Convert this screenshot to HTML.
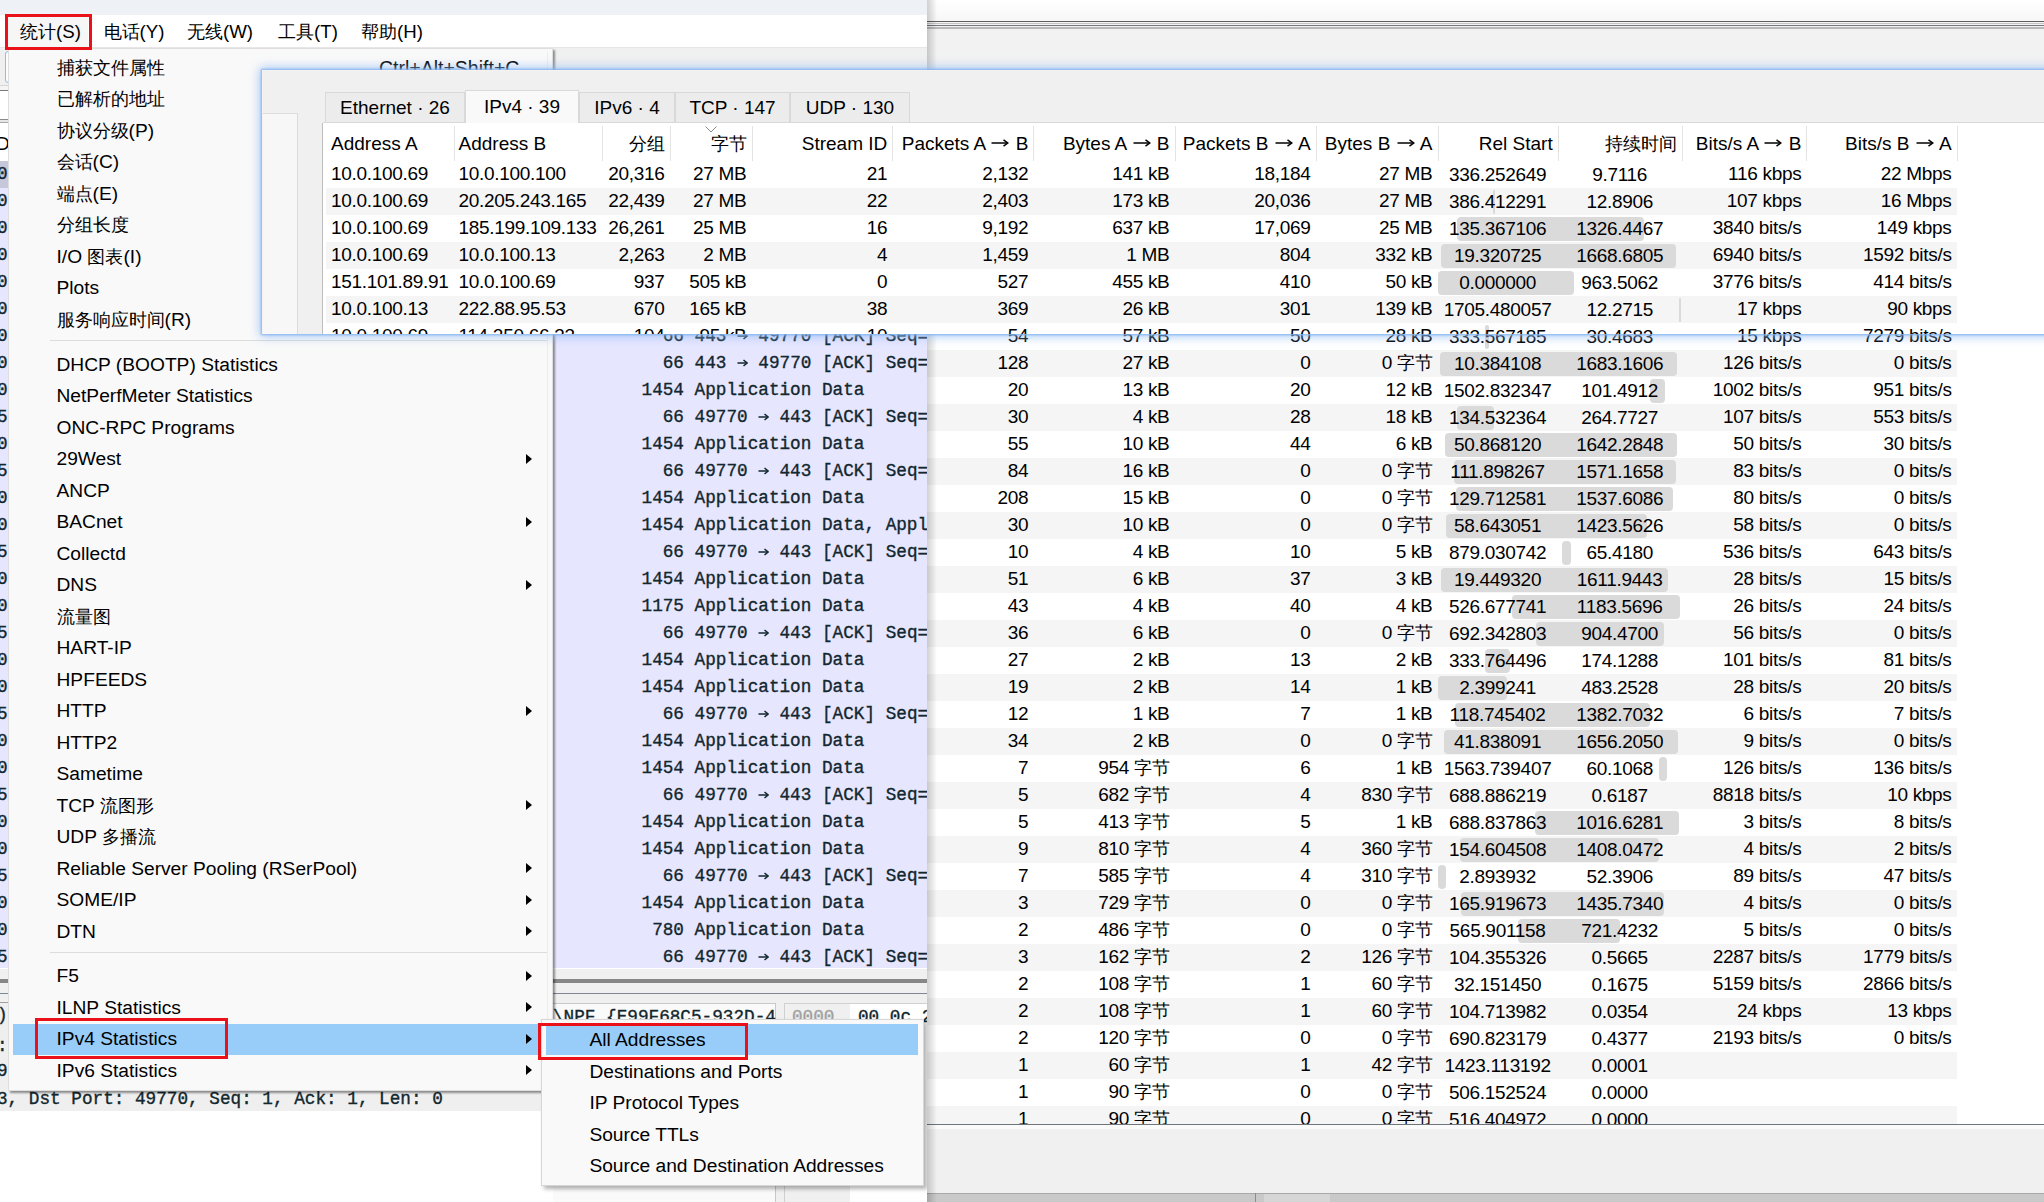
<!DOCTYPE html><html><head><meta charset="utf-8"><style>
*{margin:0;padding:0;box-sizing:border-box}
html,body{width:2044px;height:1202px;overflow:hidden;background:#f0f0f0;font-family:"Liberation Sans", sans-serif;font-size:19px;color:#000}
.a{position:absolute}
.t{position:absolute;white-space:nowrap;line-height:27px;height:27px}
.r{position:absolute;white-space:nowrap;line-height:27px;height:27px;text-align:right}
.c{position:absolute;white-space:nowrap;line-height:27px;height:27px;text-align:center}
.m{position:absolute;white-space:pre;line-height:27px;height:27px;font-family:"Liberation Mono", monospace;font-size:17.7px;color:#12272e;-webkit-text-stroke:0.35px #12272e}
.mi{position:absolute;white-space:nowrap;line-height:31px;height:31px;font-size:19.2px}
.cj{font-size:17.8px}
.n{letter-spacing:-0.3px}
.arr{position:absolute;width:0;height:0;border-top:5px solid transparent;border-bottom:5px solid transparent;border-left:6.5px solid #000}
</style></head><body>
<div style="position:absolute;left:927px;top:0px;width:1117px;height:70px;background:#f2f2f2"></div>
<div style="position:absolute;left:927px;top:0px;width:1117px;height:21px;background:linear-gradient(#ffffff,#f7f7f7)"></div>
<div style="position:absolute;left:927px;top:21px;width:1117px;height:1px;background:#5e5e5e"></div>
<div style="position:absolute;left:927px;top:23px;width:1117px;height:1px;background:#c4c4c4"></div>
<div style="position:absolute;left:927px;top:25px;width:1117px;height:1px;background:#707880"></div>
<div style="position:absolute;left:927px;top:27px;width:1117px;height:2px;background:#b9b9b9"></div>
<div class="a" style="left:262px;top:70px;width:1782px;height:1132px;background:#f0f0f0;overflow:hidden">
<div style="position:absolute;left:0px;top:43px;width:36px;height:1100px;background:#f7f7f7;border-top:1px solid #dcdcdc;border-right:1px solid #dcdcdc"></div>
<div style="position:absolute;left:61px;top:52px;width:1721px;height:1px;background:#d9d9d9"></div>
<div style="position:absolute;left:63px;top:22px;width:140px;height:31px;background:#ececec;border:1px solid #d9d9d9;border-bottom:1px solid #d9d9d9"></div>
<div class="c" style="left:63px;top:24px;width:140px">Ethernet · 26</div>
<div style="position:absolute;left:203px;top:20px;width:114px;height:33px;background:#f9f9f9;border:1px solid #d9d9d9;border-bottom:none"></div>
<div class="c" style="left:203px;top:23px;width:114px">IPv4 · 39</div>
<div style="position:absolute;left:317px;top:22px;width:96px;height:31px;background:#ececec;border:1px solid #d9d9d9;border-bottom:1px solid #d9d9d9"></div>
<div class="c" style="left:317px;top:24px;width:96px">IPv6 · 4</div>
<div style="position:absolute;left:413px;top:22px;width:115px;height:31px;background:#ececec;border:1px solid #d9d9d9;border-bottom:1px solid #d9d9d9"></div>
<div class="c" style="left:413px;top:24px;width:115px">TCP · 147</div>
<div style="position:absolute;left:528px;top:22px;width:120px;height:31px;background:#ececec;border:1px solid #d9d9d9;border-bottom:1px solid #d9d9d9"></div>
<div class="c" style="left:528px;top:24px;width:120px">UDP · 130</div>
<div style="position:absolute;left:60px;top:53px;width:1722px;height:1001px;background:#ffffff;border-left:1px solid #bdbdbd"></div>
<div style="position:absolute;left:191.5px;top:56px;width:1px;height:35px;background:#e3e3e3"></div>
<div style="position:absolute;left:339.5px;top:56px;width:1px;height:35px;background:#e3e3e3"></div>
<div style="position:absolute;left:407.5px;top:56px;width:1px;height:35px;background:#e3e3e3"></div>
<div style="position:absolute;left:489.5px;top:56px;width:1px;height:35px;background:#e3e3e3"></div>
<div style="position:absolute;left:630.3px;top:56px;width:1px;height:35px;background:#e3e3e3"></div>
<div style="position:absolute;left:771.4000000000001px;top:56px;width:1px;height:35px;background:#e3e3e3"></div>
<div style="position:absolute;left:912.5px;top:56px;width:1px;height:35px;background:#e3e3e3"></div>
<div style="position:absolute;left:1053.6px;top:56px;width:1px;height:35px;background:#e3e3e3"></div>
<div style="position:absolute;left:1175.5px;top:56px;width:1px;height:35px;background:#e3e3e3"></div>
<div style="position:absolute;left:1295.7px;top:56px;width:1px;height:35px;background:#e3e3e3"></div>
<div style="position:absolute;left:1419.7px;top:56px;width:1px;height:35px;background:#e3e3e3"></div>
<div style="position:absolute;left:1544.4px;top:56px;width:1px;height:35px;background:#e3e3e3"></div>
<div style="position:absolute;left:1694.6px;top:56px;width:1px;height:35px;background:#e3e3e3"></div>
<div class="t" style="left:69px;top:60px">Address A</div>
<div class="t" style="left:196.5px;top:60px">Address B</div>
<div class="r" style="left:339.5px;top:60px;width:63.0px"><span class="cj">分组</span></div>
<div class="r" style="left:407.5px;top:60px;width:77.0px"><span class="cj">字节</span></div>
<div class="r" style="left:489.5px;top:60px;width:135.79999999999995px">Stream ID</div>
<div class="r" style="left:630.3px;top:60px;width:136.10000000000014px">Packets A <svg width="18" height="10" style="vertical-align:2.5px;margin:0 1px"><path d="M0.5 5H16" stroke="#000" stroke-width="1.5"/><path d="M12.5 1.8L16.8 5L12.5 8.2" fill="none" stroke="#000" stroke-width="1.5"/></svg> B</div>
<div class="r" style="left:771.4000000000001px;top:60px;width:136.0999999999999px">Bytes A <svg width="18" height="10" style="vertical-align:2.5px;margin:0 1px"><path d="M0.5 5H16" stroke="#000" stroke-width="1.5"/><path d="M12.5 1.8L16.8 5L12.5 8.2" fill="none" stroke="#000" stroke-width="1.5"/></svg> B</div>
<div class="r" style="left:912.5px;top:60px;width:136.0999999999999px">Packets B <svg width="18" height="10" style="vertical-align:2.5px;margin:0 1px"><path d="M0.5 5H16" stroke="#000" stroke-width="1.5"/><path d="M12.5 1.8L16.8 5L12.5 8.2" fill="none" stroke="#000" stroke-width="1.5"/></svg> A</div>
<div class="r" style="left:1053.6px;top:60px;width:116.90000000000009px">Bytes B <svg width="18" height="10" style="vertical-align:2.5px;margin:0 1px"><path d="M0.5 5H16" stroke="#000" stroke-width="1.5"/><path d="M12.5 1.8L16.8 5L12.5 8.2" fill="none" stroke="#000" stroke-width="1.5"/></svg> A</div>
<div class="r" style="left:1175.5px;top:60px;width:115.20000000000005px">Rel Start</div>
<div class="r" style="left:1295.7px;top:60px;width:119.0px"><span class="cj">持续时间</span></div>
<div class="r" style="left:1419.7px;top:60px;width:119.70000000000005px">Bits/s A <svg width="18" height="10" style="vertical-align:2.5px;margin:0 1px"><path d="M0.5 5H16" stroke="#000" stroke-width="1.5"/><path d="M12.5 1.8L16.8 5L12.5 8.2" fill="none" stroke="#000" stroke-width="1.5"/></svg> B</div>
<div class="r" style="left:1544.4px;top:60px;width:145.19999999999982px">Bits/s B <svg width="18" height="10" style="vertical-align:2.5px;margin:0 1px"><path d="M0.5 5H16" stroke="#000" stroke-width="1.5"/><path d="M12.5 1.8L16.8 5L12.5 8.2" fill="none" stroke="#000" stroke-width="1.5"/></svg> A</div>
<svg class="a" style="left:443px;top:56px" width="12" height="8"><polyline points="0.5,0.5 6,6 11.5,0.5" fill="none" stroke="#8a8a8a" stroke-width="1"/></svg>
<div style="position:absolute;left:64px;top:118px;width:1630.6px;height:27px;background:#f5f5f5"></div>
<div style="position:absolute;left:1230.6px;top:120px;width:2px;height:24px;background:#dadada;border-radius:4px"></div>
<div style="position:absolute;left:1195.1px;top:147px;width:187.4px;height:24px;background:#dadada;border-radius:4px"></div>
<div style="position:absolute;left:64px;top:172px;width:1630.6px;height:27px;background:#f5f5f5"></div>
<div style="position:absolute;left:1178.7px;top:174px;width:235.8px;height:24px;background:#dadada;border-radius:4px"></div>
<div style="position:absolute;left:1176.0px;top:201px;width:136.1px;height:24px;background:#dadada;border-radius:4px"></div>
<div style="position:absolute;left:64px;top:226px;width:1630.6px;height:27px;background:#f5f5f5"></div>
<div style="position:absolute;left:1417.0px;top:228px;width:2px;height:24px;background:#dadada;border-radius:4px"></div>
<div style="position:absolute;left:1223.1px;top:255px;width:4.3px;height:24px;background:#dadada;border-radius:4px"></div>
<div style="position:absolute;left:64px;top:280px;width:1630.6px;height:27px;background:#f5f5f5"></div>
<div style="position:absolute;left:1177.5px;top:282px;width:237.8px;height:24px;background:#dadada;border-radius:4px"></div>
<div style="position:absolute;left:1388.3px;top:309px;width:14.3px;height:24px;background:#dadada;border-radius:4px"></div>
<div style="position:absolute;left:64px;top:334px;width:1630.6px;height:27px;background:#f5f5f5"></div>
<div style="position:absolute;left:1195.0px;top:336px;width:37.4px;height:24px;background:#dadada;border-radius:4px"></div>
<div style="position:absolute;left:1183.2px;top:363px;width:232.0px;height:24px;background:#dadada;border-radius:4px"></div>
<div style="position:absolute;left:64px;top:388px;width:1630.6px;height:27px;background:#f5f5f5"></div>
<div style="position:absolute;left:1191.8px;top:390px;width:222.0px;height:24px;background:#dadada;border-radius:4px"></div>
<div style="position:absolute;left:1194.3px;top:417px;width:217.2px;height:24px;background:#dadada;border-radius:4px"></div>
<div style="position:absolute;left:64px;top:442px;width:1630.6px;height:27px;background:#f5f5f5"></div>
<div style="position:absolute;left:1184.3px;top:444px;width:201.1px;height:24px;background:#dadada;border-radius:4px"></div>
<div style="position:absolute;left:1300.2px;top:471px;width:9.2px;height:24px;background:#dadada;border-radius:4px"></div>
<div style="position:absolute;left:64px;top:496px;width:1630.6px;height:27px;background:#f5f5f5"></div>
<div style="position:absolute;left:1178.7px;top:498px;width:227.7px;height:24px;background:#dadada;border-radius:4px"></div>
<div style="position:absolute;left:1250.4px;top:525px;width:167.2px;height:24px;background:#dadada;border-radius:4px"></div>
<div style="position:absolute;left:64px;top:550px;width:1630.6px;height:27px;background:#f5f5f5"></div>
<div style="position:absolute;left:1273.8px;top:552px;width:127.8px;height:24px;background:#dadada;border-radius:4px"></div>
<div style="position:absolute;left:1223.2px;top:579px;width:24.6px;height:24px;background:#dadada;border-radius:4px"></div>
<div style="position:absolute;left:64px;top:604px;width:1630.6px;height:27px;background:#f5f5f5"></div>
<div style="position:absolute;left:1176.3px;top:606px;width:68.3px;height:24px;background:#dadada;border-radius:4px"></div>
<div style="position:absolute;left:1192.8px;top:633px;width:195.4px;height:24px;background:#dadada;border-radius:4px"></div>
<div style="position:absolute;left:64px;top:658px;width:1630.6px;height:27px;background:#f5f5f5"></div>
<div style="position:absolute;left:1181.9px;top:660px;width:234.0px;height:24px;background:#dadada;border-radius:4px"></div>
<div style="position:absolute;left:1396.9px;top:687px;width:8.5px;height:24px;background:#dadada;border-radius:4px"></div>
<div style="position:absolute;left:64px;top:712px;width:1630.6px;height:27px;background:#f5f5f5"></div>
<div style="position:absolute;left:1273.3px;top:741px;width:143.6px;height:24px;background:#dadada;border-radius:4px"></div>
<div style="position:absolute;left:64px;top:766px;width:1630.6px;height:27px;background:#f5f5f5"></div>
<div style="position:absolute;left:1197.8px;top:768px;width:198.9px;height:24px;background:#dadada;border-radius:4px"></div>
<div style="position:absolute;left:1176.4px;top:795px;width:7.4px;height:24px;background:#dadada;border-radius:4px"></div>
<div style="position:absolute;left:64px;top:820px;width:1630.6px;height:27px;background:#f5f5f5"></div>
<div style="position:absolute;left:1199.4px;top:822px;width:202.8px;height:24px;background:#dadada;border-radius:4px"></div>
<div style="position:absolute;left:1256.0px;top:849px;width:101.9px;height:24px;background:#dadada;border-radius:4px"></div>
<div style="position:absolute;left:64px;top:874px;width:1630.6px;height:27px;background:#f5f5f5"></div>
<div style="position:absolute;left:64px;top:928px;width:1630.6px;height:27px;background:#f5f5f5"></div>
<div style="position:absolute;left:64px;top:982px;width:1630.6px;height:27px;background:#f5f5f5"></div>
<div style="position:absolute;left:64px;top:1036px;width:1630.6px;height:27px;background:#f5f5f5"></div>
<div class="t n" style="left:69px;top:89.7px">10.0.100.69</div>
<div class="t n" style="left:196.5px;top:89.7px">10.0.100.100</div>
<div class="r n" style="left:339.5px;top:89.7px;width:63.0px">20,316</div>
<div class="r n" style="left:407.5px;top:89.7px;width:77.0px">27 MB</div>
<div class="r n" style="left:489.5px;top:89.7px;width:135.79999999999995px">21</div>
<div class="r n" style="left:630.3px;top:89.7px;width:136.10000000000014px">2,132</div>
<div class="r n" style="left:771.4000000000001px;top:89.7px;width:136.0999999999999px">141 kB</div>
<div class="r n" style="left:912.5px;top:89.7px;width:136.0999999999999px">18,184</div>
<div class="r n" style="left:1053.6px;top:89.7px;width:116.90000000000009px">27 MB</div>
<div class="c n" style="left:1175.5px;top:90.7px;width:120.20000000000005px">336.252649</div>
<div class="c n" style="left:1295.7px;top:90.7px;width:124.0px">9.7116</div>
<div class="r n" style="left:1419.7px;top:89.7px;width:119.70000000000005px">116 kbps</div>
<div class="r n" style="left:1544.4px;top:89.7px;width:145.19999999999982px">22 Mbps</div>
<div class="t n" style="left:69px;top:116.7px">10.0.100.69</div>
<div class="t n" style="left:196.5px;top:116.7px">20.205.243.165</div>
<div class="r n" style="left:339.5px;top:116.7px;width:63.0px">22,439</div>
<div class="r n" style="left:407.5px;top:116.7px;width:77.0px">27 MB</div>
<div class="r n" style="left:489.5px;top:116.7px;width:135.79999999999995px">22</div>
<div class="r n" style="left:630.3px;top:116.7px;width:136.10000000000014px">2,403</div>
<div class="r n" style="left:771.4000000000001px;top:116.7px;width:136.0999999999999px">173 kB</div>
<div class="r n" style="left:912.5px;top:116.7px;width:136.0999999999999px">20,036</div>
<div class="r n" style="left:1053.6px;top:116.7px;width:116.90000000000009px">27 MB</div>
<div class="c n" style="left:1175.5px;top:117.7px;width:120.20000000000005px">386.412291</div>
<div class="c n" style="left:1295.7px;top:117.7px;width:124.0px">12.8906</div>
<div class="r n" style="left:1419.7px;top:116.7px;width:119.70000000000005px">107 kbps</div>
<div class="r n" style="left:1544.4px;top:116.7px;width:145.19999999999982px">16 Mbps</div>
<div class="t n" style="left:69px;top:143.7px">10.0.100.69</div>
<div class="t n" style="left:196.5px;top:143.7px">185.199.109.133</div>
<div class="r n" style="left:339.5px;top:143.7px;width:63.0px">26,261</div>
<div class="r n" style="left:407.5px;top:143.7px;width:77.0px">25 MB</div>
<div class="r n" style="left:489.5px;top:143.7px;width:135.79999999999995px">16</div>
<div class="r n" style="left:630.3px;top:143.7px;width:136.10000000000014px">9,192</div>
<div class="r n" style="left:771.4000000000001px;top:143.7px;width:136.0999999999999px">637 kB</div>
<div class="r n" style="left:912.5px;top:143.7px;width:136.0999999999999px">17,069</div>
<div class="r n" style="left:1053.6px;top:143.7px;width:116.90000000000009px">25 MB</div>
<div class="c n" style="left:1175.5px;top:144.7px;width:120.20000000000005px">135.367106</div>
<div class="c n" style="left:1295.7px;top:144.7px;width:124.0px">1326.4467</div>
<div class="r n" style="left:1419.7px;top:143.7px;width:119.70000000000005px">3840 bits/s</div>
<div class="r n" style="left:1544.4px;top:143.7px;width:145.19999999999982px">149 kbps</div>
<div class="t n" style="left:69px;top:170.7px">10.0.100.69</div>
<div class="t n" style="left:196.5px;top:170.7px">10.0.100.13</div>
<div class="r n" style="left:339.5px;top:170.7px;width:63.0px">2,263</div>
<div class="r n" style="left:407.5px;top:170.7px;width:77.0px">2 MB</div>
<div class="r n" style="left:489.5px;top:170.7px;width:135.79999999999995px">4</div>
<div class="r n" style="left:630.3px;top:170.7px;width:136.10000000000014px">1,459</div>
<div class="r n" style="left:771.4000000000001px;top:170.7px;width:136.0999999999999px">1 MB</div>
<div class="r n" style="left:912.5px;top:170.7px;width:136.0999999999999px">804</div>
<div class="r n" style="left:1053.6px;top:170.7px;width:116.90000000000009px">332 kB</div>
<div class="c n" style="left:1175.5px;top:171.7px;width:120.20000000000005px">19.320725</div>
<div class="c n" style="left:1295.7px;top:171.7px;width:124.0px">1668.6805</div>
<div class="r n" style="left:1419.7px;top:170.7px;width:119.70000000000005px">6940 bits/s</div>
<div class="r n" style="left:1544.4px;top:170.7px;width:145.19999999999982px">1592 bits/s</div>
<div class="t n" style="left:69px;top:197.7px">151.101.89.91</div>
<div class="t n" style="left:196.5px;top:197.7px">10.0.100.69</div>
<div class="r n" style="left:339.5px;top:197.7px;width:63.0px">937</div>
<div class="r n" style="left:407.5px;top:197.7px;width:77.0px">505 kB</div>
<div class="r n" style="left:489.5px;top:197.7px;width:135.79999999999995px">0</div>
<div class="r n" style="left:630.3px;top:197.7px;width:136.10000000000014px">527</div>
<div class="r n" style="left:771.4000000000001px;top:197.7px;width:136.0999999999999px">455 kB</div>
<div class="r n" style="left:912.5px;top:197.7px;width:136.0999999999999px">410</div>
<div class="r n" style="left:1053.6px;top:197.7px;width:116.90000000000009px">50 kB</div>
<div class="c n" style="left:1175.5px;top:198.7px;width:120.20000000000005px">0.000000</div>
<div class="c n" style="left:1295.7px;top:198.7px;width:124.0px">963.5062</div>
<div class="r n" style="left:1419.7px;top:197.7px;width:119.70000000000005px">3776 bits/s</div>
<div class="r n" style="left:1544.4px;top:197.7px;width:145.19999999999982px">414 bits/s</div>
<div class="t n" style="left:69px;top:224.7px">10.0.100.13</div>
<div class="t n" style="left:196.5px;top:224.7px">222.88.95.53</div>
<div class="r n" style="left:339.5px;top:224.7px;width:63.0px">670</div>
<div class="r n" style="left:407.5px;top:224.7px;width:77.0px">165 kB</div>
<div class="r n" style="left:489.5px;top:224.7px;width:135.79999999999995px">38</div>
<div class="r n" style="left:630.3px;top:224.7px;width:136.10000000000014px">369</div>
<div class="r n" style="left:771.4000000000001px;top:224.7px;width:136.0999999999999px">26 kB</div>
<div class="r n" style="left:912.5px;top:224.7px;width:136.0999999999999px">301</div>
<div class="r n" style="left:1053.6px;top:224.7px;width:116.90000000000009px">139 kB</div>
<div class="c n" style="left:1175.5px;top:225.7px;width:120.20000000000005px">1705.480057</div>
<div class="c n" style="left:1295.7px;top:225.7px;width:124.0px">12.2715</div>
<div class="r n" style="left:1419.7px;top:224.7px;width:119.70000000000005px">17 kbps</div>
<div class="r n" style="left:1544.4px;top:224.7px;width:145.19999999999982px">90 kbps</div>
<div class="t n" style="left:69px;top:251.7px">10.0.100.69</div>
<div class="t n" style="left:196.5px;top:251.7px">114.250.66.33</div>
<div class="r n" style="left:339.5px;top:251.7px;width:63.0px">104</div>
<div class="r n" style="left:407.5px;top:251.7px;width:77.0px">95 kB</div>
<div class="r n" style="left:489.5px;top:251.7px;width:135.79999999999995px">10</div>
<div class="r n" style="left:630.3px;top:251.7px;width:136.10000000000014px">54</div>
<div class="r n" style="left:771.4000000000001px;top:251.7px;width:136.0999999999999px">57 kB</div>
<div class="r n" style="left:912.5px;top:251.7px;width:136.0999999999999px">50</div>
<div class="r n" style="left:1053.6px;top:251.7px;width:116.90000000000009px">28 kB</div>
<div class="c n" style="left:1175.5px;top:252.7px;width:120.20000000000005px">333.567185</div>
<div class="c n" style="left:1295.7px;top:252.7px;width:124.0px">30.4683</div>
<div class="r n" style="left:1419.7px;top:251.7px;width:119.70000000000005px">15 kbps</div>
<div class="r n" style="left:1544.4px;top:251.7px;width:145.19999999999982px">7279 bits/s</div>
<div class="r n" style="left:630.3px;top:278.7px;width:136.10000000000014px">128</div>
<div class="r n" style="left:771.4000000000001px;top:278.7px;width:136.0999999999999px">27 kB</div>
<div class="r n" style="left:912.5px;top:278.7px;width:136.0999999999999px">0</div>
<div class="r n" style="left:1053.6px;top:278.7px;width:116.90000000000009px">0 <span class="cj">字节</span></div>
<div class="c n" style="left:1175.5px;top:279.7px;width:120.20000000000005px">10.384108</div>
<div class="c n" style="left:1295.7px;top:279.7px;width:124.0px">1683.1606</div>
<div class="r n" style="left:1419.7px;top:278.7px;width:119.70000000000005px">126 bits/s</div>
<div class="r n" style="left:1544.4px;top:278.7px;width:145.19999999999982px">0 bits/s</div>
<div class="r n" style="left:630.3px;top:305.7px;width:136.10000000000014px">20</div>
<div class="r n" style="left:771.4000000000001px;top:305.7px;width:136.0999999999999px">13 kB</div>
<div class="r n" style="left:912.5px;top:305.7px;width:136.0999999999999px">20</div>
<div class="r n" style="left:1053.6px;top:305.7px;width:116.90000000000009px">12 kB</div>
<div class="c n" style="left:1175.5px;top:306.7px;width:120.20000000000005px">1502.832347</div>
<div class="c n" style="left:1295.7px;top:306.7px;width:124.0px">101.4912</div>
<div class="r n" style="left:1419.7px;top:305.7px;width:119.70000000000005px">1002 bits/s</div>
<div class="r n" style="left:1544.4px;top:305.7px;width:145.19999999999982px">951 bits/s</div>
<div class="r n" style="left:630.3px;top:332.7px;width:136.10000000000014px">30</div>
<div class="r n" style="left:771.4000000000001px;top:332.7px;width:136.0999999999999px">4 kB</div>
<div class="r n" style="left:912.5px;top:332.7px;width:136.0999999999999px">28</div>
<div class="r n" style="left:1053.6px;top:332.7px;width:116.90000000000009px">18 kB</div>
<div class="c n" style="left:1175.5px;top:333.7px;width:120.20000000000005px">134.532364</div>
<div class="c n" style="left:1295.7px;top:333.7px;width:124.0px">264.7727</div>
<div class="r n" style="left:1419.7px;top:332.7px;width:119.70000000000005px">107 bits/s</div>
<div class="r n" style="left:1544.4px;top:332.7px;width:145.19999999999982px">553 bits/s</div>
<div class="r n" style="left:630.3px;top:359.7px;width:136.10000000000014px">55</div>
<div class="r n" style="left:771.4000000000001px;top:359.7px;width:136.0999999999999px">10 kB</div>
<div class="r n" style="left:912.5px;top:359.7px;width:136.0999999999999px">44</div>
<div class="r n" style="left:1053.6px;top:359.7px;width:116.90000000000009px">6 kB</div>
<div class="c n" style="left:1175.5px;top:360.7px;width:120.20000000000005px">50.868120</div>
<div class="c n" style="left:1295.7px;top:360.7px;width:124.0px">1642.2848</div>
<div class="r n" style="left:1419.7px;top:359.7px;width:119.70000000000005px">50 bits/s</div>
<div class="r n" style="left:1544.4px;top:359.7px;width:145.19999999999982px">30 bits/s</div>
<div class="r n" style="left:630.3px;top:386.7px;width:136.10000000000014px">84</div>
<div class="r n" style="left:771.4000000000001px;top:386.7px;width:136.0999999999999px">16 kB</div>
<div class="r n" style="left:912.5px;top:386.7px;width:136.0999999999999px">0</div>
<div class="r n" style="left:1053.6px;top:386.7px;width:116.90000000000009px">0 <span class="cj">字节</span></div>
<div class="c n" style="left:1175.5px;top:387.7px;width:120.20000000000005px">111.898267</div>
<div class="c n" style="left:1295.7px;top:387.7px;width:124.0px">1571.1658</div>
<div class="r n" style="left:1419.7px;top:386.7px;width:119.70000000000005px">83 bits/s</div>
<div class="r n" style="left:1544.4px;top:386.7px;width:145.19999999999982px">0 bits/s</div>
<div class="r n" style="left:630.3px;top:413.7px;width:136.10000000000014px">208</div>
<div class="r n" style="left:771.4000000000001px;top:413.7px;width:136.0999999999999px">15 kB</div>
<div class="r n" style="left:912.5px;top:413.7px;width:136.0999999999999px">0</div>
<div class="r n" style="left:1053.6px;top:413.7px;width:116.90000000000009px">0 <span class="cj">字节</span></div>
<div class="c n" style="left:1175.5px;top:414.7px;width:120.20000000000005px">129.712581</div>
<div class="c n" style="left:1295.7px;top:414.7px;width:124.0px">1537.6086</div>
<div class="r n" style="left:1419.7px;top:413.7px;width:119.70000000000005px">80 bits/s</div>
<div class="r n" style="left:1544.4px;top:413.7px;width:145.19999999999982px">0 bits/s</div>
<div class="r n" style="left:630.3px;top:440.7px;width:136.10000000000014px">30</div>
<div class="r n" style="left:771.4000000000001px;top:440.7px;width:136.0999999999999px">10 kB</div>
<div class="r n" style="left:912.5px;top:440.7px;width:136.0999999999999px">0</div>
<div class="r n" style="left:1053.6px;top:440.7px;width:116.90000000000009px">0 <span class="cj">字节</span></div>
<div class="c n" style="left:1175.5px;top:441.7px;width:120.20000000000005px">58.643051</div>
<div class="c n" style="left:1295.7px;top:441.7px;width:124.0px">1423.5626</div>
<div class="r n" style="left:1419.7px;top:440.7px;width:119.70000000000005px">58 bits/s</div>
<div class="r n" style="left:1544.4px;top:440.7px;width:145.19999999999982px">0 bits/s</div>
<div class="r n" style="left:630.3px;top:467.7px;width:136.10000000000014px">10</div>
<div class="r n" style="left:771.4000000000001px;top:467.7px;width:136.0999999999999px">4 kB</div>
<div class="r n" style="left:912.5px;top:467.7px;width:136.0999999999999px">10</div>
<div class="r n" style="left:1053.6px;top:467.7px;width:116.90000000000009px">5 kB</div>
<div class="c n" style="left:1175.5px;top:468.7px;width:120.20000000000005px">879.030742</div>
<div class="c n" style="left:1295.7px;top:468.7px;width:124.0px">65.4180</div>
<div class="r n" style="left:1419.7px;top:467.7px;width:119.70000000000005px">536 bits/s</div>
<div class="r n" style="left:1544.4px;top:467.7px;width:145.19999999999982px">643 bits/s</div>
<div class="r n" style="left:630.3px;top:494.7px;width:136.10000000000014px">51</div>
<div class="r n" style="left:771.4000000000001px;top:494.7px;width:136.0999999999999px">6 kB</div>
<div class="r n" style="left:912.5px;top:494.7px;width:136.0999999999999px">37</div>
<div class="r n" style="left:1053.6px;top:494.7px;width:116.90000000000009px">3 kB</div>
<div class="c n" style="left:1175.5px;top:495.7px;width:120.20000000000005px">19.449320</div>
<div class="c n" style="left:1295.7px;top:495.7px;width:124.0px">1611.9443</div>
<div class="r n" style="left:1419.7px;top:494.7px;width:119.70000000000005px">28 bits/s</div>
<div class="r n" style="left:1544.4px;top:494.7px;width:145.19999999999982px">15 bits/s</div>
<div class="r n" style="left:630.3px;top:521.7px;width:136.10000000000014px">43</div>
<div class="r n" style="left:771.4000000000001px;top:521.7px;width:136.0999999999999px">4 kB</div>
<div class="r n" style="left:912.5px;top:521.7px;width:136.0999999999999px">40</div>
<div class="r n" style="left:1053.6px;top:521.7px;width:116.90000000000009px">4 kB</div>
<div class="c n" style="left:1175.5px;top:522.7px;width:120.20000000000005px">526.677741</div>
<div class="c n" style="left:1295.7px;top:522.7px;width:124.0px">1183.5696</div>
<div class="r n" style="left:1419.7px;top:521.7px;width:119.70000000000005px">26 bits/s</div>
<div class="r n" style="left:1544.4px;top:521.7px;width:145.19999999999982px">24 bits/s</div>
<div class="r n" style="left:630.3px;top:548.7px;width:136.10000000000014px">36</div>
<div class="r n" style="left:771.4000000000001px;top:548.7px;width:136.0999999999999px">6 kB</div>
<div class="r n" style="left:912.5px;top:548.7px;width:136.0999999999999px">0</div>
<div class="r n" style="left:1053.6px;top:548.7px;width:116.90000000000009px">0 <span class="cj">字节</span></div>
<div class="c n" style="left:1175.5px;top:549.7px;width:120.20000000000005px">692.342803</div>
<div class="c n" style="left:1295.7px;top:549.7px;width:124.0px">904.4700</div>
<div class="r n" style="left:1419.7px;top:548.7px;width:119.70000000000005px">56 bits/s</div>
<div class="r n" style="left:1544.4px;top:548.7px;width:145.19999999999982px">0 bits/s</div>
<div class="r n" style="left:630.3px;top:575.7px;width:136.10000000000014px">27</div>
<div class="r n" style="left:771.4000000000001px;top:575.7px;width:136.0999999999999px">2 kB</div>
<div class="r n" style="left:912.5px;top:575.7px;width:136.0999999999999px">13</div>
<div class="r n" style="left:1053.6px;top:575.7px;width:116.90000000000009px">2 kB</div>
<div class="c n" style="left:1175.5px;top:576.7px;width:120.20000000000005px">333.764496</div>
<div class="c n" style="left:1295.7px;top:576.7px;width:124.0px">174.1288</div>
<div class="r n" style="left:1419.7px;top:575.7px;width:119.70000000000005px">101 bits/s</div>
<div class="r n" style="left:1544.4px;top:575.7px;width:145.19999999999982px">81 bits/s</div>
<div class="r n" style="left:630.3px;top:602.7px;width:136.10000000000014px">19</div>
<div class="r n" style="left:771.4000000000001px;top:602.7px;width:136.0999999999999px">2 kB</div>
<div class="r n" style="left:912.5px;top:602.7px;width:136.0999999999999px">14</div>
<div class="r n" style="left:1053.6px;top:602.7px;width:116.90000000000009px">1 kB</div>
<div class="c n" style="left:1175.5px;top:603.7px;width:120.20000000000005px">2.399241</div>
<div class="c n" style="left:1295.7px;top:603.7px;width:124.0px">483.2528</div>
<div class="r n" style="left:1419.7px;top:602.7px;width:119.70000000000005px">28 bits/s</div>
<div class="r n" style="left:1544.4px;top:602.7px;width:145.19999999999982px">20 bits/s</div>
<div class="r n" style="left:630.3px;top:629.7px;width:136.10000000000014px">12</div>
<div class="r n" style="left:771.4000000000001px;top:629.7px;width:136.0999999999999px">1 kB</div>
<div class="r n" style="left:912.5px;top:629.7px;width:136.0999999999999px">7</div>
<div class="r n" style="left:1053.6px;top:629.7px;width:116.90000000000009px">1 kB</div>
<div class="c n" style="left:1175.5px;top:630.7px;width:120.20000000000005px">118.745402</div>
<div class="c n" style="left:1295.7px;top:630.7px;width:124.0px">1382.7032</div>
<div class="r n" style="left:1419.7px;top:629.7px;width:119.70000000000005px">6 bits/s</div>
<div class="r n" style="left:1544.4px;top:629.7px;width:145.19999999999982px">7 bits/s</div>
<div class="r n" style="left:630.3px;top:656.7px;width:136.10000000000014px">34</div>
<div class="r n" style="left:771.4000000000001px;top:656.7px;width:136.0999999999999px">2 kB</div>
<div class="r n" style="left:912.5px;top:656.7px;width:136.0999999999999px">0</div>
<div class="r n" style="left:1053.6px;top:656.7px;width:116.90000000000009px">0 <span class="cj">字节</span></div>
<div class="c n" style="left:1175.5px;top:657.7px;width:120.20000000000005px">41.838091</div>
<div class="c n" style="left:1295.7px;top:657.7px;width:124.0px">1656.2050</div>
<div class="r n" style="left:1419.7px;top:656.7px;width:119.70000000000005px">9 bits/s</div>
<div class="r n" style="left:1544.4px;top:656.7px;width:145.19999999999982px">0 bits/s</div>
<div class="r n" style="left:630.3px;top:683.7px;width:136.10000000000014px">7</div>
<div class="r n" style="left:771.4000000000001px;top:683.7px;width:136.0999999999999px">954 <span class="cj">字节</span></div>
<div class="r n" style="left:912.5px;top:683.7px;width:136.0999999999999px">6</div>
<div class="r n" style="left:1053.6px;top:683.7px;width:116.90000000000009px">1 kB</div>
<div class="c n" style="left:1175.5px;top:684.7px;width:120.20000000000005px">1563.739407</div>
<div class="c n" style="left:1295.7px;top:684.7px;width:124.0px">60.1068</div>
<div class="r n" style="left:1419.7px;top:683.7px;width:119.70000000000005px">126 bits/s</div>
<div class="r n" style="left:1544.4px;top:683.7px;width:145.19999999999982px">136 bits/s</div>
<div class="r n" style="left:630.3px;top:710.7px;width:136.10000000000014px">5</div>
<div class="r n" style="left:771.4000000000001px;top:710.7px;width:136.0999999999999px">682 <span class="cj">字节</span></div>
<div class="r n" style="left:912.5px;top:710.7px;width:136.0999999999999px">4</div>
<div class="r n" style="left:1053.6px;top:710.7px;width:116.90000000000009px">830 <span class="cj">字节</span></div>
<div class="c n" style="left:1175.5px;top:711.7px;width:120.20000000000005px">688.886219</div>
<div class="c n" style="left:1295.7px;top:711.7px;width:124.0px">0.6187</div>
<div class="r n" style="left:1419.7px;top:710.7px;width:119.70000000000005px">8818 bits/s</div>
<div class="r n" style="left:1544.4px;top:710.7px;width:145.19999999999982px">10 kbps</div>
<div class="r n" style="left:630.3px;top:737.7px;width:136.10000000000014px">5</div>
<div class="r n" style="left:771.4000000000001px;top:737.7px;width:136.0999999999999px">413 <span class="cj">字节</span></div>
<div class="r n" style="left:912.5px;top:737.7px;width:136.0999999999999px">5</div>
<div class="r n" style="left:1053.6px;top:737.7px;width:116.90000000000009px">1 kB</div>
<div class="c n" style="left:1175.5px;top:738.7px;width:120.20000000000005px">688.837863</div>
<div class="c n" style="left:1295.7px;top:738.7px;width:124.0px">1016.6281</div>
<div class="r n" style="left:1419.7px;top:737.7px;width:119.70000000000005px">3 bits/s</div>
<div class="r n" style="left:1544.4px;top:737.7px;width:145.19999999999982px">8 bits/s</div>
<div class="r n" style="left:630.3px;top:764.7px;width:136.10000000000014px">9</div>
<div class="r n" style="left:771.4000000000001px;top:764.7px;width:136.0999999999999px">810 <span class="cj">字节</span></div>
<div class="r n" style="left:912.5px;top:764.7px;width:136.0999999999999px">4</div>
<div class="r n" style="left:1053.6px;top:764.7px;width:116.90000000000009px">360 <span class="cj">字节</span></div>
<div class="c n" style="left:1175.5px;top:765.7px;width:120.20000000000005px">154.604508</div>
<div class="c n" style="left:1295.7px;top:765.7px;width:124.0px">1408.0472</div>
<div class="r n" style="left:1419.7px;top:764.7px;width:119.70000000000005px">4 bits/s</div>
<div class="r n" style="left:1544.4px;top:764.7px;width:145.19999999999982px">2 bits/s</div>
<div class="r n" style="left:630.3px;top:791.7px;width:136.10000000000014px">7</div>
<div class="r n" style="left:771.4000000000001px;top:791.7px;width:136.0999999999999px">585 <span class="cj">字节</span></div>
<div class="r n" style="left:912.5px;top:791.7px;width:136.0999999999999px">4</div>
<div class="r n" style="left:1053.6px;top:791.7px;width:116.90000000000009px">310 <span class="cj">字节</span></div>
<div class="c n" style="left:1175.5px;top:792.7px;width:120.20000000000005px">2.893932</div>
<div class="c n" style="left:1295.7px;top:792.7px;width:124.0px">52.3906</div>
<div class="r n" style="left:1419.7px;top:791.7px;width:119.70000000000005px">89 bits/s</div>
<div class="r n" style="left:1544.4px;top:791.7px;width:145.19999999999982px">47 bits/s</div>
<div class="r n" style="left:630.3px;top:818.7px;width:136.10000000000014px">3</div>
<div class="r n" style="left:771.4000000000001px;top:818.7px;width:136.0999999999999px">729 <span class="cj">字节</span></div>
<div class="r n" style="left:912.5px;top:818.7px;width:136.0999999999999px">0</div>
<div class="r n" style="left:1053.6px;top:818.7px;width:116.90000000000009px">0 <span class="cj">字节</span></div>
<div class="c n" style="left:1175.5px;top:819.7px;width:120.20000000000005px">165.919673</div>
<div class="c n" style="left:1295.7px;top:819.7px;width:124.0px">1435.7340</div>
<div class="r n" style="left:1419.7px;top:818.7px;width:119.70000000000005px">4 bits/s</div>
<div class="r n" style="left:1544.4px;top:818.7px;width:145.19999999999982px">0 bits/s</div>
<div class="r n" style="left:630.3px;top:845.7px;width:136.10000000000014px">2</div>
<div class="r n" style="left:771.4000000000001px;top:845.7px;width:136.0999999999999px">486 <span class="cj">字节</span></div>
<div class="r n" style="left:912.5px;top:845.7px;width:136.0999999999999px">0</div>
<div class="r n" style="left:1053.6px;top:845.7px;width:116.90000000000009px">0 <span class="cj">字节</span></div>
<div class="c n" style="left:1175.5px;top:846.7px;width:120.20000000000005px">565.901158</div>
<div class="c n" style="left:1295.7px;top:846.7px;width:124.0px">721.4232</div>
<div class="r n" style="left:1419.7px;top:845.7px;width:119.70000000000005px">5 bits/s</div>
<div class="r n" style="left:1544.4px;top:845.7px;width:145.19999999999982px">0 bits/s</div>
<div class="r n" style="left:630.3px;top:872.7px;width:136.10000000000014px">3</div>
<div class="r n" style="left:771.4000000000001px;top:872.7px;width:136.0999999999999px">162 <span class="cj">字节</span></div>
<div class="r n" style="left:912.5px;top:872.7px;width:136.0999999999999px">2</div>
<div class="r n" style="left:1053.6px;top:872.7px;width:116.90000000000009px">126 <span class="cj">字节</span></div>
<div class="c n" style="left:1175.5px;top:873.7px;width:120.20000000000005px">104.355326</div>
<div class="c n" style="left:1295.7px;top:873.7px;width:124.0px">0.5665</div>
<div class="r n" style="left:1419.7px;top:872.7px;width:119.70000000000005px">2287 bits/s</div>
<div class="r n" style="left:1544.4px;top:872.7px;width:145.19999999999982px">1779 bits/s</div>
<div class="r n" style="left:630.3px;top:899.7px;width:136.10000000000014px">2</div>
<div class="r n" style="left:771.4000000000001px;top:899.7px;width:136.0999999999999px">108 <span class="cj">字节</span></div>
<div class="r n" style="left:912.5px;top:899.7px;width:136.0999999999999px">1</div>
<div class="r n" style="left:1053.6px;top:899.7px;width:116.90000000000009px">60 <span class="cj">字节</span></div>
<div class="c n" style="left:1175.5px;top:900.7px;width:120.20000000000005px">32.151450</div>
<div class="c n" style="left:1295.7px;top:900.7px;width:124.0px">0.1675</div>
<div class="r n" style="left:1419.7px;top:899.7px;width:119.70000000000005px">5159 bits/s</div>
<div class="r n" style="left:1544.4px;top:899.7px;width:145.19999999999982px">2866 bits/s</div>
<div class="r n" style="left:630.3px;top:926.7px;width:136.10000000000014px">2</div>
<div class="r n" style="left:771.4000000000001px;top:926.7px;width:136.0999999999999px">108 <span class="cj">字节</span></div>
<div class="r n" style="left:912.5px;top:926.7px;width:136.0999999999999px">1</div>
<div class="r n" style="left:1053.6px;top:926.7px;width:116.90000000000009px">60 <span class="cj">字节</span></div>
<div class="c n" style="left:1175.5px;top:927.7px;width:120.20000000000005px">104.713982</div>
<div class="c n" style="left:1295.7px;top:927.7px;width:124.0px">0.0354</div>
<div class="r n" style="left:1419.7px;top:926.7px;width:119.70000000000005px">24 kbps</div>
<div class="r n" style="left:1544.4px;top:926.7px;width:145.19999999999982px">13 kbps</div>
<div class="r n" style="left:630.3px;top:953.7px;width:136.10000000000014px">2</div>
<div class="r n" style="left:771.4000000000001px;top:953.7px;width:136.0999999999999px">120 <span class="cj">字节</span></div>
<div class="r n" style="left:912.5px;top:953.7px;width:136.0999999999999px">0</div>
<div class="r n" style="left:1053.6px;top:953.7px;width:116.90000000000009px">0 <span class="cj">字节</span></div>
<div class="c n" style="left:1175.5px;top:954.7px;width:120.20000000000005px">690.823179</div>
<div class="c n" style="left:1295.7px;top:954.7px;width:124.0px">0.4377</div>
<div class="r n" style="left:1419.7px;top:953.7px;width:119.70000000000005px">2193 bits/s</div>
<div class="r n" style="left:1544.4px;top:953.7px;width:145.19999999999982px">0 bits/s</div>
<div class="r n" style="left:630.3px;top:980.7px;width:136.10000000000014px">1</div>
<div class="r n" style="left:771.4000000000001px;top:980.7px;width:136.0999999999999px">60 <span class="cj">字节</span></div>
<div class="r n" style="left:912.5px;top:980.7px;width:136.0999999999999px">1</div>
<div class="r n" style="left:1053.6px;top:980.7px;width:116.90000000000009px">42 <span class="cj">字节</span></div>
<div class="c n" style="left:1175.5px;top:981.7px;width:120.20000000000005px">1423.113192</div>
<div class="c n" style="left:1295.7px;top:981.7px;width:124.0px">0.0001</div>
<div class="r n" style="left:630.3px;top:1007.7px;width:136.10000000000014px">1</div>
<div class="r n" style="left:771.4000000000001px;top:1007.7px;width:136.0999999999999px">90 <span class="cj">字节</span></div>
<div class="r n" style="left:912.5px;top:1007.7px;width:136.0999999999999px">0</div>
<div class="r n" style="left:1053.6px;top:1007.7px;width:116.90000000000009px">0 <span class="cj">字节</span></div>
<div class="c n" style="left:1175.5px;top:1008.7px;width:120.20000000000005px">506.152524</div>
<div class="c n" style="left:1295.7px;top:1008.7px;width:124.0px">0.0000</div>
<div class="r n" style="left:630.3px;top:1034.7px;width:136.10000000000014px">1</div>
<div class="r n" style="left:771.4000000000001px;top:1034.7px;width:136.0999999999999px">90 <span class="cj">字节</span></div>
<div class="r n" style="left:912.5px;top:1034.7px;width:136.0999999999999px">0</div>
<div class="r n" style="left:1053.6px;top:1034.7px;width:116.90000000000009px">0 <span class="cj">字节</span></div>
<div class="c n" style="left:1175.5px;top:1035.7px;width:120.20000000000005px">516.404972</div>
<div class="c n" style="left:1295.7px;top:1035.7px;width:124.0px">0.0000</div>
<div style="position:absolute;left:0px;top:1054px;width:1782px;height:1px;background:#6f757c"></div>
<div style="position:absolute;left:0px;top:1055px;width:1782px;height:68px;background:#f0f0f0;border-top:4px solid #fbfbfb"></div>
<div style="position:absolute;left:0px;top:1123px;width:1782px;height:9px;background:#c9c9c9;border-top:1px solid #a8a8a8"></div>
<div style="position:absolute;left:993px;top:1123px;width:1px;height:9px;background:#8c8c8c"></div>
<div style="position:absolute;left:1002px;top:1124px;width:66px;height:8px;background:#d6d6d6"></div>
</div>
<div style="position:absolute;left:927px;top:0px;width:10px;height:70px;background:linear-gradient(to right,rgba(0,0,0,0.18),rgba(0,0,0,0))"></div>
<div style="position:absolute;left:927px;top:334px;width:10px;height:868px;background:linear-gradient(to right,rgba(0,0,0,0.18),rgba(0,0,0,0))"></div>
<div class="a" style="left:0;top:0;width:927px;height:1202px;overflow:hidden;clip-path:polygon(0 0,927px 0,927px 70px,262px 70px,262px 334px,927px 334px,927px 1202px,0 1202px)">
<div style="position:absolute;left:0px;top:0px;width:927px;height:1202px;background:#f0f0f0"></div>
<div style="position:absolute;left:0px;top:0px;width:927px;height:15px;background:#eef2f7"></div>
<div style="position:absolute;left:0px;top:15px;width:927px;height:32px;background:#ffffff"></div>
<div style="position:absolute;left:0px;top:47px;width:927px;height:1px;background:#e6e6e6"></div>
<div style="position:absolute;left:8px;top:17px;width:80px;height:30px;background:#f6f6f6"></div>
<div class="t" style="left:20px;top:18px;font-size:18.7px"><span class="cj">统计</span>(S)</div>
<div class="t" style="left:103.5px;top:18px;font-size:18.7px"><span class="cj">电话</span>(Y)</div>
<div class="t" style="left:187px;top:18px;font-size:18.7px"><span class="cj">无线</span>(W)</div>
<div class="t" style="left:278px;top:18px;font-size:18.7px"><span class="cj">工具</span>(T)</div>
<div class="t" style="left:361px;top:18px;font-size:18.7px"><span class="cj">帮助</span>(H)</div>
<div style="position:absolute;left:0px;top:48px;width:927px;height:37px;background:#f0f0f0"></div>
<div style="position:absolute;left:5px;top:51px;width:40px;height:32px;background:#fbfdff;border:1px solid #8fbbe8;border-radius:3px"></div>
<div style="position:absolute;left:0px;top:85px;width:927px;height:1px;background:#d6d6d6"></div>
<div style="position:absolute;left:0px;top:86px;width:927px;height:4px;background:#f4f4f4"></div>
<div style="position:absolute;left:0px;top:90px;width:927px;height:1px;background:#7a7a7a"></div>
<div style="position:absolute;left:0px;top:91px;width:927px;height:28px;background:#ffffff"></div>
<div style="position:absolute;left:0px;top:119px;width:927px;height:1px;background:#8a8a8a"></div>
<div style="position:absolute;left:0px;top:120px;width:927px;height:2px;background:#e6e6e6"></div>
<div style="position:absolute;left:0px;top:122px;width:927px;height:1px;background:#a8a8a8"></div>
<div style="position:absolute;left:0px;top:123px;width:927px;height:38px;background:#ffffff"></div>
<div class="t" style="left:-4px;top:130px">Do</div>
<div style="position:absolute;left:0px;top:161px;width:927px;height:27px;background:#c7c7dc"></div>
<div style="position:absolute;left:0px;top:188px;width:927px;height:27px;background:#e7e6ff"></div>
<div style="position:absolute;left:0px;top:215px;width:927px;height:27px;background:#e7e6ff"></div>
<div style="position:absolute;left:0px;top:242px;width:927px;height:27px;background:#e7e6ff"></div>
<div style="position:absolute;left:0px;top:269px;width:927px;height:27px;background:#e7e6ff"></div>
<div style="position:absolute;left:0px;top:296px;width:927px;height:27px;background:#e7e6ff"></div>
<div style="position:absolute;left:0px;top:323px;width:927px;height:27px;background:#e7e6ff"></div>
<div style="position:absolute;left:0px;top:350px;width:927px;height:27px;background:#e7e6ff"></div>
<div style="position:absolute;left:0px;top:377px;width:927px;height:27px;background:#e7e6ff"></div>
<div style="position:absolute;left:0px;top:404px;width:927px;height:27px;background:#e7e6ff"></div>
<div style="position:absolute;left:0px;top:431px;width:927px;height:27px;background:#e7e6ff"></div>
<div style="position:absolute;left:0px;top:458px;width:927px;height:27px;background:#e7e6ff"></div>
<div style="position:absolute;left:0px;top:485px;width:927px;height:27px;background:#e7e6ff"></div>
<div style="position:absolute;left:0px;top:512px;width:927px;height:27px;background:#e7e6ff"></div>
<div style="position:absolute;left:0px;top:539px;width:927px;height:27px;background:#e7e6ff"></div>
<div style="position:absolute;left:0px;top:566px;width:927px;height:27px;background:#e7e6ff"></div>
<div style="position:absolute;left:0px;top:593px;width:927px;height:27px;background:#e7e6ff"></div>
<div style="position:absolute;left:0px;top:620px;width:927px;height:27px;background:#e7e6ff"></div>
<div style="position:absolute;left:0px;top:647px;width:927px;height:27px;background:#e7e6ff"></div>
<div style="position:absolute;left:0px;top:674px;width:927px;height:27px;background:#e7e6ff"></div>
<div style="position:absolute;left:0px;top:701px;width:927px;height:27px;background:#e7e6ff"></div>
<div style="position:absolute;left:0px;top:728px;width:927px;height:27px;background:#e7e6ff"></div>
<div style="position:absolute;left:0px;top:755px;width:927px;height:27px;background:#e7e6ff"></div>
<div style="position:absolute;left:0px;top:782px;width:927px;height:27px;background:#e7e6ff"></div>
<div style="position:absolute;left:0px;top:809px;width:927px;height:27px;background:#e7e6ff"></div>
<div style="position:absolute;left:0px;top:836px;width:927px;height:27px;background:#e7e6ff"></div>
<div style="position:absolute;left:0px;top:863px;width:927px;height:27px;background:#e7e6ff"></div>
<div style="position:absolute;left:0px;top:890px;width:927px;height:27px;background:#e7e6ff"></div>
<div style="position:absolute;left:0px;top:917px;width:927px;height:27px;background:#e7e6ff"></div>
<div style="position:absolute;left:0px;top:944px;width:927px;height:24px;background:#e7e6ff"></div>
<div class="m" style="left:-3px;top:161px">0</div>
<div class="m" style="left:-3px;top:188px">0</div>
<div class="m" style="left:-3px;top:215px">0</div>
<div class="m" style="left:-3px;top:242px">0</div>
<div class="m" style="left:-3px;top:269px">0</div>
<div class="m" style="left:-3px;top:296px">0</div>
<div class="m" style="left:-3px;top:323px">0</div>
<div class="m" style="left:-3px;top:350px">0</div>
<div class="m" style="left:-3px;top:377px">0</div>
<div class="m" style="left:-3px;top:404px">5</div>
<div class="m" style="left:-3px;top:431px">0</div>
<div class="m" style="left:-3px;top:458px">5</div>
<div class="m" style="left:-3px;top:485px">0</div>
<div class="m" style="left:-3px;top:512px">0</div>
<div class="m" style="left:-3px;top:539px">5</div>
<div class="m" style="left:-3px;top:566px">0</div>
<div class="m" style="left:-3px;top:593px">0</div>
<div class="m" style="left:-3px;top:620px">5</div>
<div class="m" style="left:-3px;top:647px">0</div>
<div class="m" style="left:-3px;top:674px">0</div>
<div class="m" style="left:-3px;top:701px">5</div>
<div class="m" style="left:-3px;top:728px">0</div>
<div class="m" style="left:-3px;top:755px">0</div>
<div class="m" style="left:-3px;top:782px">5</div>
<div class="m" style="left:-3px;top:809px">0</div>
<div class="m" style="left:-3px;top:836px">0</div>
<div class="m" style="left:-3px;top:863px">5</div>
<div class="m" style="left:-3px;top:890px">0</div>
<div class="m" style="left:-3px;top:917px">0</div>
<div class="m" style="left:-3px;top:944px">5</div>
<div class="m" style="left:662.76px;top:323px">66 443 <span style="display:inline-block;width:10.62px;height:10px;position:relative"><svg width="11" height="10" style="position:absolute;left:0;top:0px"><path d="M0.5 5H9.5" stroke="#12272e" stroke-width="1.5"/><path d="M6.5 2L10 5L6.5 8" fill="none" stroke="#12272e" stroke-width="1.5"/></svg></span> 49770 [ACK] Seq=</div>
<div class="m" style="left:662.76px;top:350px">66 443 <span style="display:inline-block;width:10.62px;height:10px;position:relative"><svg width="11" height="10" style="position:absolute;left:0;top:0px"><path d="M0.5 5H9.5" stroke="#12272e" stroke-width="1.5"/><path d="M6.5 2L10 5L6.5 8" fill="none" stroke="#12272e" stroke-width="1.5"/></svg></span> 49770 [ACK] Seq=</div>
<div class="m" style="left:641.52px;top:377px">1454 Application Data</div>
<div class="m" style="left:662.76px;top:404px">66 49770 <span style="display:inline-block;width:10.62px;height:10px;position:relative"><svg width="11" height="10" style="position:absolute;left:0;top:0px"><path d="M0.5 5H9.5" stroke="#12272e" stroke-width="1.5"/><path d="M6.5 2L10 5L6.5 8" fill="none" stroke="#12272e" stroke-width="1.5"/></svg></span> 443 [ACK] Seq=</div>
<div class="m" style="left:641.52px;top:431px">1454 Application Data</div>
<div class="m" style="left:662.76px;top:458px">66 49770 <span style="display:inline-block;width:10.62px;height:10px;position:relative"><svg width="11" height="10" style="position:absolute;left:0;top:0px"><path d="M0.5 5H9.5" stroke="#12272e" stroke-width="1.5"/><path d="M6.5 2L10 5L6.5 8" fill="none" stroke="#12272e" stroke-width="1.5"/></svg></span> 443 [ACK] Seq=</div>
<div class="m" style="left:641.52px;top:485px">1454 Application Data</div>
<div class="m" style="left:641.52px;top:512px">1454 Application Data, Appl</div>
<div class="m" style="left:662.76px;top:539px">66 49770 <span style="display:inline-block;width:10.62px;height:10px;position:relative"><svg width="11" height="10" style="position:absolute;left:0;top:0px"><path d="M0.5 5H9.5" stroke="#12272e" stroke-width="1.5"/><path d="M6.5 2L10 5L6.5 8" fill="none" stroke="#12272e" stroke-width="1.5"/></svg></span> 443 [ACK] Seq=</div>
<div class="m" style="left:641.52px;top:566px">1454 Application Data</div>
<div class="m" style="left:641.52px;top:593px">1175 Application Data</div>
<div class="m" style="left:662.76px;top:620px">66 49770 <span style="display:inline-block;width:10.62px;height:10px;position:relative"><svg width="11" height="10" style="position:absolute;left:0;top:0px"><path d="M0.5 5H9.5" stroke="#12272e" stroke-width="1.5"/><path d="M6.5 2L10 5L6.5 8" fill="none" stroke="#12272e" stroke-width="1.5"/></svg></span> 443 [ACK] Seq=</div>
<div class="m" style="left:641.52px;top:647px">1454 Application Data</div>
<div class="m" style="left:641.52px;top:674px">1454 Application Data</div>
<div class="m" style="left:662.76px;top:701px">66 49770 <span style="display:inline-block;width:10.62px;height:10px;position:relative"><svg width="11" height="10" style="position:absolute;left:0;top:0px"><path d="M0.5 5H9.5" stroke="#12272e" stroke-width="1.5"/><path d="M6.5 2L10 5L6.5 8" fill="none" stroke="#12272e" stroke-width="1.5"/></svg></span> 443 [ACK] Seq=</div>
<div class="m" style="left:641.52px;top:728px">1454 Application Data</div>
<div class="m" style="left:641.52px;top:755px">1454 Application Data</div>
<div class="m" style="left:662.76px;top:782px">66 49770 <span style="display:inline-block;width:10.62px;height:10px;position:relative"><svg width="11" height="10" style="position:absolute;left:0;top:0px"><path d="M0.5 5H9.5" stroke="#12272e" stroke-width="1.5"/><path d="M6.5 2L10 5L6.5 8" fill="none" stroke="#12272e" stroke-width="1.5"/></svg></span> 443 [ACK] Seq=</div>
<div class="m" style="left:641.52px;top:809px">1454 Application Data</div>
<div class="m" style="left:641.52px;top:836px">1454 Application Data</div>
<div class="m" style="left:662.76px;top:863px">66 49770 <span style="display:inline-block;width:10.62px;height:10px;position:relative"><svg width="11" height="10" style="position:absolute;left:0;top:0px"><path d="M0.5 5H9.5" stroke="#12272e" stroke-width="1.5"/><path d="M6.5 2L10 5L6.5 8" fill="none" stroke="#12272e" stroke-width="1.5"/></svg></span> 443 [ACK] Seq=</div>
<div class="m" style="left:641.52px;top:890px">1454 Application Data</div>
<div class="m" style="left:652.14px;top:917px">780 Application Data</div>
<div class="m" style="left:662.76px;top:944px">66 49770 <span style="display:inline-block;width:10.62px;height:10px;position:relative"><svg width="11" height="10" style="position:absolute;left:0;top:0px"><path d="M0.5 5H9.5" stroke="#12272e" stroke-width="1.5"/><path d="M6.5 2L10 5L6.5 8" fill="none" stroke="#12272e" stroke-width="1.5"/></svg></span> 443 [ACK] Seq=</div>
<div style="position:absolute;left:0px;top:968px;width:927px;height:11px;background:#f0f0f0;border-top:1px solid #ffffff"></div>
<div style="position:absolute;left:0px;top:979px;width:927px;height:4px;background:#878787"></div>
<div style="position:absolute;left:0px;top:983px;width:927px;height:10px;background:#f0f0f0"></div>
<div style="position:absolute;left:0px;top:993px;width:927px;height:1px;background:#7d8791"></div>
<div style="position:absolute;left:0px;top:994px;width:927px;height:9px;background:#f0f0f0"></div>
<div style="position:absolute;left:0px;top:1002px;width:553px;height:1px;background:#a0a0a0"></div>
<div style="position:absolute;left:0px;top:1003px;width:776px;height:108px;background:#efefef"></div>
<div style="position:absolute;left:0px;top:1111px;width:776px;height:91px;background:#ffffff"></div>
<div style="position:absolute;left:553px;top:1003px;width:223px;height:199px;background:#fafafa;border-top:1px solid #c8c8c8;border-right:1px solid #c8c8c8"></div>
<div class="m" style="left:553px;top:1004px">\NPF_{E99F68C5-932D-4</div>
<div style="position:absolute;left:776px;top:1003px;width:151px;height:199px;background:#f0f0f0"></div>
<div style="position:absolute;left:784px;top:1003px;width:143px;height:199px;background:#ffffff;border-top:1px solid #d0d0d0;border-left:1px solid #d0d0d0"></div>
<div style="position:absolute;left:785px;top:1004px;width:65px;height:198px;background:#f0f0f0"></div>
<div class="m" style="left:792px;top:1004px;color:#a0a0a0;-webkit-text-stroke:0.35px #a0a0a0">0000</div>
<div class="m" style="left:858px;top:1004px">00 0c 29</div>
<div class="m" style="left:-3px;top:1002px">)</div>
<div class="m" style="left:-3px;top:1033px">:</div>
<div class="m" style="left:-3px;top:1058px">9</div>
<div class="m" style="left:-3px;top:1086px">3, Dst Port: 49770, Seq: 1, Ack: 1, Len: 0</div>
<div style="position:absolute;left:8px;top:48px;width:545px;height:1043px;background:#f9f9f9;border:1px solid #dedede;box-shadow:2px 2px 2px rgba(0,0,0,0.42)"></div>
<div style="position:absolute;left:547px;top:52px;width:1px;height:1035px;background:#ececec"></div>
<div style="position:absolute;left:13px;top:1024px;width:530px;height:31px;background:#98cdfa"></div>
<div class="mi" style="left:56.5px;top:51.5px"><span class="cj">捕获文件属性</span></div>
<div class="mi" style="left:56.5px;top:83.0px"><span class="cj">已解析的地址</span></div>
<div class="mi" style="left:56.5px;top:114.5px"><span class="cj">协议分级</span>(P)</div>
<div class="mi" style="left:56.5px;top:146.0px"><span class="cj">会话</span>(C)</div>
<div class="mi" style="left:56.5px;top:177.5px"><span class="cj">端点</span>(E)</div>
<div class="mi" style="left:56.5px;top:209.0px"><span class="cj">分组长度</span></div>
<div class="mi" style="left:56.5px;top:240.5px">I/O <span class="cj">图表</span>(I)</div>
<div class="mi" style="left:56.5px;top:272.0px">Plots</div>
<div class="mi" style="left:56.5px;top:303.5px"><span class="cj">服务响应时间</span>(R)</div>
<div class="mi" style="left:379px;top:53px;font-size:19.5px">Ctrl+Alt+Shift+C</div>
<div style="position:absolute;left:50px;top:340px;width:497px;height:1px;background:#dcdcdc"></div>
<div class="mi" style="left:56.5px;top:348.5px">DHCP (BOOTP) Statistics</div>
<div class="mi" style="left:56.5px;top:380.0px">NetPerfMeter Statistics</div>
<div class="mi" style="left:56.5px;top:411.5px">ONC-RPC Programs</div>
<div class="mi" style="left:56.5px;top:443.0px">29West</div>
<div class="arr" style="left:526px;top:453.5px"></div>
<div class="mi" style="left:56.5px;top:474.5px">ANCP</div>
<div class="mi" style="left:56.5px;top:506.0px">BACnet</div>
<div class="arr" style="left:526px;top:516.5px"></div>
<div class="mi" style="left:56.5px;top:537.5px">Collectd</div>
<div class="mi" style="left:56.5px;top:569.0px">DNS</div>
<div class="arr" style="left:526px;top:579.5px"></div>
<div class="mi" style="left:56.5px;top:600.5px"><span class="cj">流量图</span></div>
<div class="mi" style="left:56.5px;top:632.0px">HART-IP</div>
<div class="mi" style="left:56.5px;top:663.5px">HPFEEDS</div>
<div class="mi" style="left:56.5px;top:695.0px">HTTP</div>
<div class="arr" style="left:526px;top:705.5px"></div>
<div class="mi" style="left:56.5px;top:726.5px">HTTP2</div>
<div class="mi" style="left:56.5px;top:758.0px">Sametime</div>
<div class="mi" style="left:56.5px;top:789.5px">TCP <span class="cj">流图形</span></div>
<div class="arr" style="left:526px;top:800.0px"></div>
<div class="mi" style="left:56.5px;top:821.0px">UDP <span class="cj">多播流</span></div>
<div class="mi" style="left:56.5px;top:852.5px">Reliable Server Pooling (RSerPool)</div>
<div class="arr" style="left:526px;top:863.0px"></div>
<div class="mi" style="left:56.5px;top:884.0px">SOME/IP</div>
<div class="arr" style="left:526px;top:894.5px"></div>
<div class="mi" style="left:56.5px;top:915.5px">DTN</div>
<div class="arr" style="left:526px;top:926.0px"></div>
<div style="position:absolute;left:50px;top:952px;width:497px;height:1px;background:#dcdcdc"></div>
<div class="mi" style="left:56.5px;top:960.0px">F5</div>
<div class="arr" style="left:526px;top:970.5px"></div>
<div class="mi" style="left:56.5px;top:991.5px">ILNP Statistics</div>
<div class="arr" style="left:526px;top:1002.0px"></div>
<div class="mi" style="left:56.5px;top:1023.0px">IPv4 Statistics</div>
<div class="arr" style="left:526px;top:1033.5px"></div>
<div class="mi" style="left:56.5px;top:1054.5px">IPv6 Statistics</div>
<div class="arr" style="left:526px;top:1065.0px"></div>
<div style="position:absolute;left:5px;top:14px;width:87px;height:36px;border:3px solid #eb1119"></div>
<div style="position:absolute;left:35px;top:1018px;width:193px;height:41px;border:3px solid #eb1119"></div>
<div style="position:absolute;left:541px;top:1019px;width:383px;height:167px;background:#f9f9f9;border:1px solid #d6d6d6;box-shadow:3px 3px 4px rgba(0,0,0,0.3)"></div>
<div style="position:absolute;left:546px;top:1024px;width:372px;height:31px;background:#98cdfa"></div>
<div class="mi" style="left:589.4px;top:1024.0px">All Addresses</div>
<div class="mi" style="left:589.4px;top:1055.5px">Destinations and Ports</div>
<div class="mi" style="left:589.4px;top:1087.0px">IP Protocol Types</div>
<div class="mi" style="left:589.4px;top:1118.5px">Source TTLs</div>
<div class="mi" style="left:589.4px;top:1150.0px">Source and Destination Addresses</div>
<div style="position:absolute;left:538px;top:1023px;width:210px;height:37px;border:3px solid #eb1119"></div>
</div>
<div style="position:absolute;left:262px;top:70px;width:1800px;height:264px;box-shadow:0 0 2px 1px rgba(130,180,240,0.95),0 0 10px 2px rgba(140,185,245,0.8);border-top:1px solid #f6f2f2;border-left:1px solid #f6f2f2"></div>
</body></html>
